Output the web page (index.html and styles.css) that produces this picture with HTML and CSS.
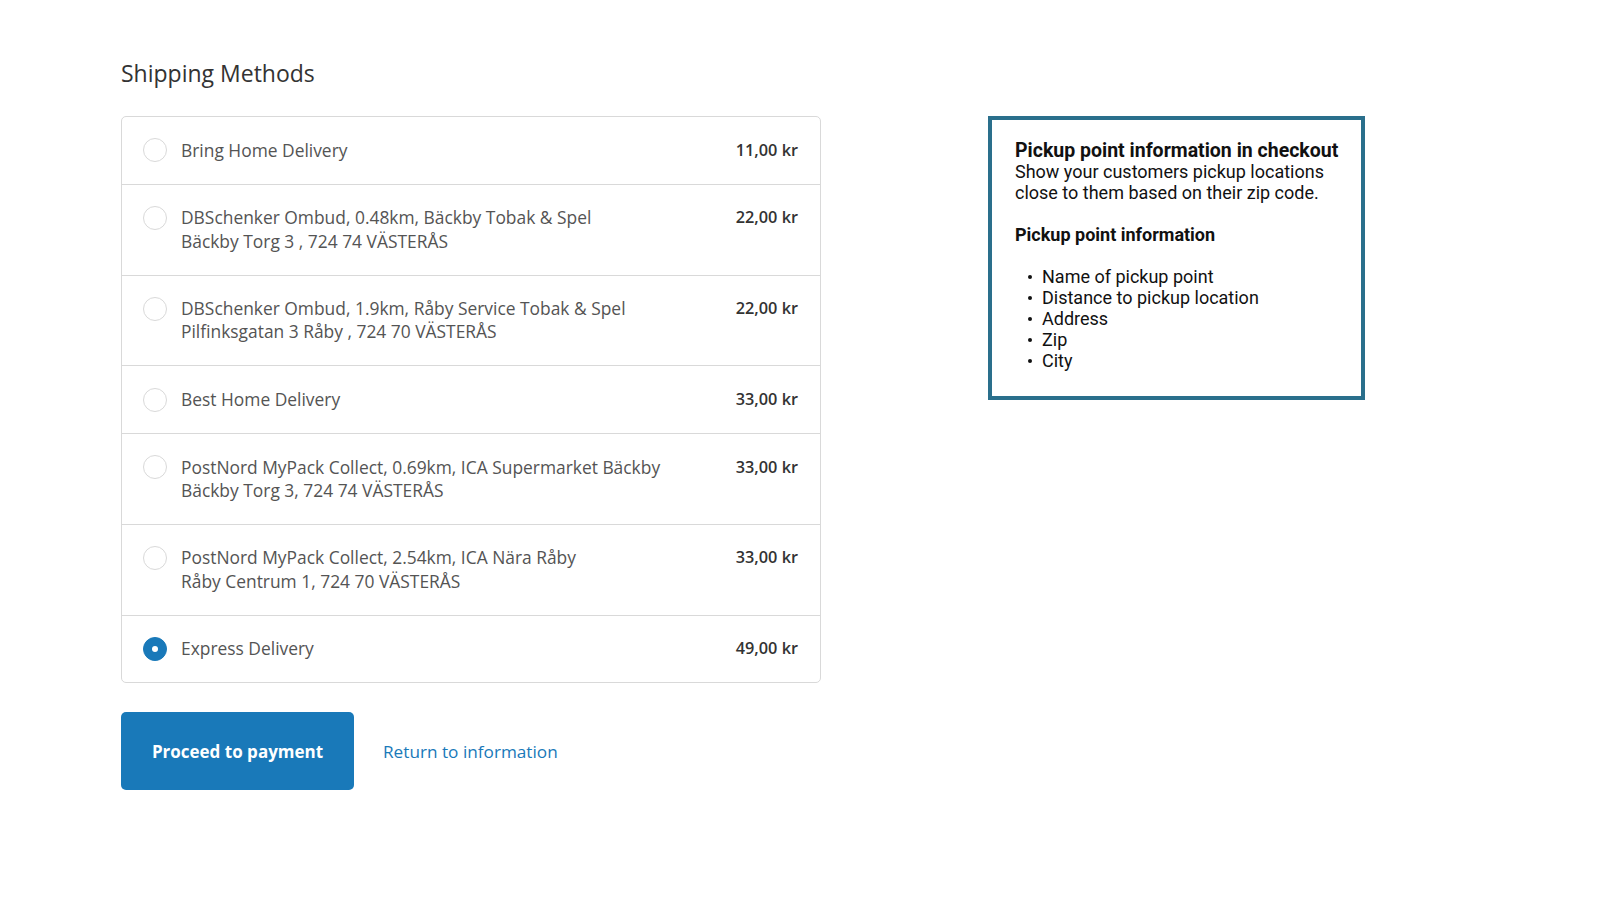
FILE: index.html
```html
<!DOCTYPE html>
<html lang="en">
<head>
<meta charset="utf-8">
<title>Shipping Methods</title>
<link rel="stylesheet" href="styles.css">
</head>
<body>
<div class="page">
  <section class="checkout">
    <h2 class="section-title">Shipping Methods</h2>
    <div class="methods">
      <div class="method">
        <span class="radio"></span>
        <div class="label">Bring Home Delivery</div>
        <div class="price">11,00 kr</div>
      </div>
      <div class="method">
        <span class="radio"></span>
        <div class="label">DBSchenker Ombud, 0.48km, Bäckby Tobak &amp; Spel<br>Bäckby Torg 3 , 724 74 VÄSTERÅS</div>
        <div class="price">22,00 kr</div>
      </div>
      <div class="method">
        <span class="radio"></span>
        <div class="label">DBSchenker Ombud, 1.9km, Råby Service Tobak &amp; Spel<br>Pilfinksgatan 3 Råby , 724 70 VÄSTERÅS</div>
        <div class="price">22,00 kr</div>
      </div>
      <div class="method">
        <span class="radio"></span>
        <div class="label">Best Home Delivery</div>
        <div class="price">33,00 kr</div>
      </div>
      <div class="method">
        <span class="radio"></span>
        <div class="label">PostNord MyPack Collect, 0.69km, ICA Supermarket Bäckby<br>Bäckby Torg 3, 724 74 VÄSTERÅS</div>
        <div class="price">33,00 kr</div>
      </div>
      <div class="method">
        <span class="radio"></span>
        <div class="label">PostNord MyPack Collect, 2.54km, ICA Nära Råby<br>Råby Centrum 1, 724 70 VÄSTERÅS</div>
        <div class="price">33,00 kr</div>
      </div>
      <div class="method">
        <span class="radio checked"></span>
        <div class="label">Express Delivery</div>
        <div class="price">49,00 kr</div>
      </div>
    </div>
    <div class="actions">
      <button class="btn-primary" type="button">Proceed to payment</button>
      <a class="link" href="#">Return to information</a>
    </div>
  </section>
  <aside class="info">
    <div class="info-title">Pickup point information in checkout</div>
    <div>Show your customers pickup locations close to them based on their zip code.</div>
    <div class="info-sub">Pickup point information</div>
    <ul class="info-list">
      <li>Name of pickup point</li>
      <li>Distance to pickup location</li>
      <li>Address</li>
      <li>Zip</li>
      <li>City</li>
    </ul>
  </aside>
</div>
</body>
</html>
```

FILE: styles.css
```css
* { box-sizing: border-box; }
html, body { margin: 0; padding: 0; background: #fff; }
body { font-family: "Open Sans", "Noto Sans", sans-serif; }

.page {
  display: flex;
  align-items: flex-start;
  padding: 57px 0 0 121px;
  gap: 167px;
}

.checkout { width: 700px; }

.section-title {
  margin: 0 0 27px;
  font-weight: 400;
  font-size: 23px;
  line-height: 32px;
  color: #333;
}

.methods {
  border: 1px solid #d9d9d9;
  border-radius: 5px;
}

.method {
  display: flex;
  align-items: flex-start;
  padding: 21.5px 22px 21.5px 21px;
  border-top: 1px solid #d9d9d9;
  font-size: 17.4px;
  line-height: 23.4px;
}
.method:first-child { border-top: none; }

.radio {
  flex: none;
  width: 24px;
  height: 24px;
  margin: -0.3px 14px 0 0;
  border: 1px solid #d9d9d9;
  border-radius: 50%;
  display: flex;
  align-items: center;
  justify-content: center;
}
.radio.checked {
  background: #1979b9;
  border-color: #1979b9;
}
.radio.checked::after {
  content: "";
  width: 6px;
  height: 6px;
  border-radius: 50%;
  background: #fff;
}

.label { flex: 1; color: #545454; }
.price { color: #333; font-size: 16.3px; font-weight: 600; white-space: nowrap; }

.actions {
  display: flex;
  align-items: center;
  gap: 29px;
  margin-top: 29px;
}

.btn-primary {
  width: 233px;
  height: 78px;
  border: none;
  border-radius: 5px;
  background: #1979b9;
  color: #fff;
  font-family: inherit;
  font-size: 17px;
  font-weight: 700;
}

.link {
  color: #1979b9;
  text-decoration: none;
  font-size: 17.2px;
}

.info {
  margin-top: 59px;
  width: 377px;
  border: 4px solid #2a6f8c;
  padding: 20px 14px 25px 23px;
  font-family: Roboto, "Liberation Sans", sans-serif;
  font-size: 18px;
  line-height: 21px;
  color: #111;
}
.info-title { font-weight: 700; font-size: 19.5px; white-space: nowrap; }
.info-sub { font-weight: 700; margin: 21px 0; }
.info-list {
  margin: 0;
  padding: 0 0 0 27px;
  list-style: none;
}
.info-list li { position: relative; }
.info-list li::before {
  content: "";
  position: absolute;
  left: -14px;
  top: 9px;
  width: 4px;
  height: 4px;
  border-radius: 50%;
  background: #111;
}
```
